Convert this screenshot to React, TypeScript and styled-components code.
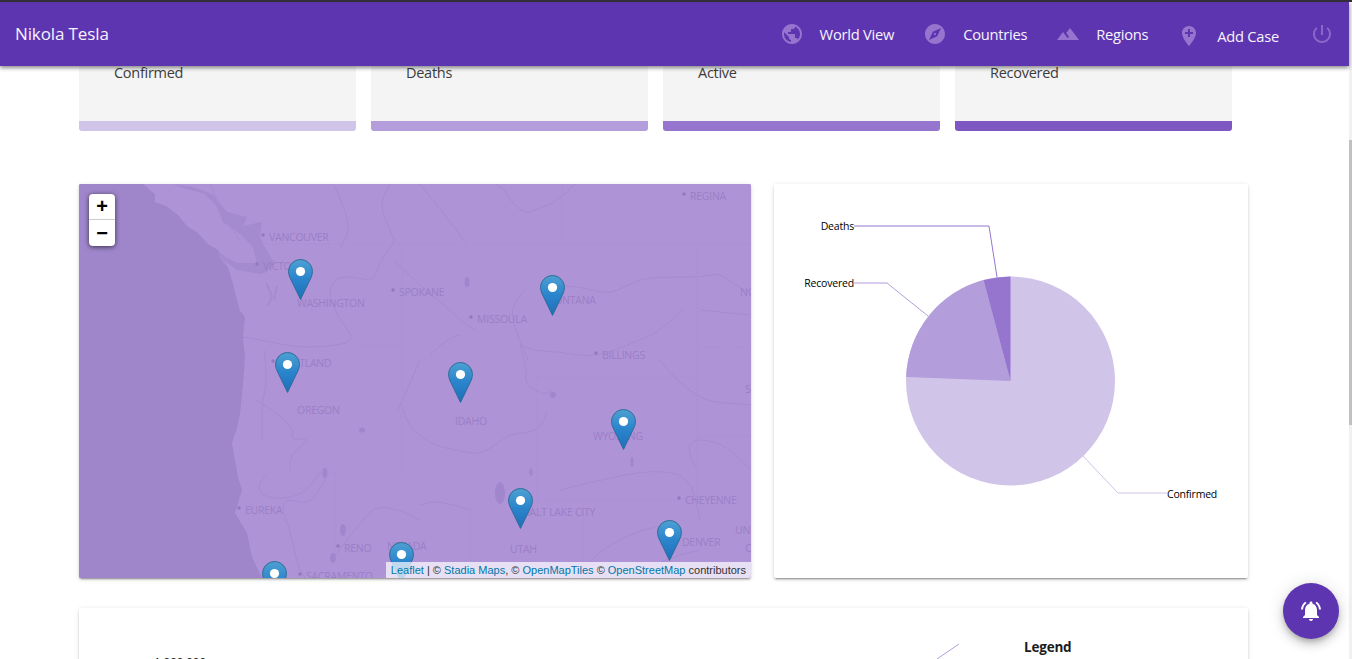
import React from "react";
import styled, { createGlobalStyle } from "styled-components";

const PURPLE = "#5e35b1";
const UI_FONT = `"Open Sans", "Noto Sans", sans-serif`;

const Global = createGlobalStyle`
  html, body { margin: 0; padding: 0; height: 100%; overflow: hidden; background: #fff; }
  #root { height: 100%; }
  * { box-sizing: border-box; }
`;

const Page = styled.div`
  width: 1352px;
  height: 659px;
  display: flex;
  flex-direction: column;
  overflow: hidden;
  font-family: ${UI_FONT};
  background: #fff;
`;
const WindowEdge = styled.div`
  height: 2px;
  flex: none;
  background: #33303a;
`;
const Viewport = styled.div`
  flex: 1;
  min-height: 0;
  display: flex;
`;
const Column = styled.div`
  width: 1349px;
  display: flex;
  flex-direction: column;
  min-height: 0;
`;
const ScrollTrack = styled.div`
  width: 3px;
  background: #f1f1f1;
  padding-top: 138px;
`;
const ScrollThumb = styled.div`
  height: 285px;
  background: #c1c1c1;
`;
const AppBar = styled.header`
  height: 64px;
  flex: none;
  position: relative;
  z-index: 3;
  display: flex;
  align-items: center;
  justify-content: space-between;
  padding: 0 15px;
  background: ${PURPLE};
  color: #f7f3fd;
  box-shadow: 0 2px 4px rgba(0, 0, 0, 0.45);
`;
const Brand = styled.div`
  font-size: 17px;
  letter-spacing: -0.12px;
  margin-top: -1px;
`;
const Nav = styled.nav`
  display: flex;
  align-items: center;
`;
const NavItem = styled.a`
  display: flex;
  align-items: center;
  gap: 16px;
  margin-right: 29px;
  font-size: 14.7px;
  letter-spacing: -0.25px;
  white-space: nowrap;
`;
const NavLabel = styled.span<{ $drop?: boolean }>`
  margin-top: ${(p) => (p.$drop ? "3px" : "-1px")};
`;
const NavIcon = styled.svg<{ $drop?: boolean }>`
  width: 24px;
  height: 24px;
  fill: #9575cd;
  flex: none;
  margin-top: ${(p) => (p.$drop ? "4px" : "0")};
`;
const PowerIcon = styled.svg`
  width: 24px;
  height: 24px;
  margin-left: 2px;
  fill: #8a68c8;
  flex: none;
`;
const Main = styled.main`
  flex: 1;
  min-height: 0;
  overflow: hidden;
  padding-left: 79px;
  display: flex;
  flex-direction: column;
`;
const StatRow = styled.section`
  display: grid;
  grid-template-columns: repeat(4, 277px);
  gap: 15px;
`;
const StatCard = styled.div<{ $bar: string }>`
  height: 65px;
  background: #f4f4f4;
  border-bottom: 10px solid ${(p) => p.$bar};
  border-radius: 0 0 3px 3px;
  padding-left: 35px;
  color: #3c3c3c;
  font-size: 14.5px;
  letter-spacing: -0.27px;
  line-height: 14px;
`;
const MapRow = styled.section`
  display: flex;
  gap: 23px;
  margin-top: 53px;
`;
const Surface = `
  background: #fff;
  border-radius: 2px;
  box-shadow: 0 2px 2px 0 rgba(0,0,0,.14), 0 3px 1px -2px rgba(0,0,0,.2), 0 1px 5px 0 rgba(0,0,0,.12);
`;
const MapCard = styled.div`
  ${Surface}
  position: relative;
  width: 672px;
  height: 394px;
  overflow: hidden;
  background: #ae93d7;
`;
const MapArt = styled.svg`
  display: block;
  width: 672px;
  height: 394px;
`;
const MapLabel = styled.text`
  font-family: ${UI_FONT};
  font-size: 10.5px;
  fill: #9a7fc6;
  letter-spacing: -0.25px;
`;
const ZoomControl = styled.div`
  position: absolute;
  left: 10px;
  top: 10px;
  width: 26px;
  border-radius: 4px;
  background: #fff;
  box-shadow: 0 1px 5px rgba(0, 0, 0, 0.65);
  display: flex;
  flex-direction: column;
`;
const ZoomButton = styled.div<{ $last?: boolean }>`
  height: 26px;
  display: flex;
  align-items: center;
  justify-content: center;
  color: #000;
  font: bold 20px "Liberation Sans", sans-serif;
  border-bottom: ${(p) => (p.$last ? "none" : "1px solid #ccc")};
`;
const Attribution = styled.div`
  position: absolute;
  right: 0;
  bottom: 0;
  height: 16px;
  padding: 0 5px;
  background: rgba(255, 255, 255, 0.7);
  color: #333;
  font: 11px/16px "Liberation Sans", sans-serif;
  white-space: nowrap;
`;
const AttrLink = styled.a`
  color: #0078a8;
`;
const PinSvg = styled.svg<{ $x: number; $y: number }>`
  position: absolute;
  left: ${(p) => p.$x - 79 - 12.5}px;
  top: ${(p) => p.$y - 184}px;
  width: 25px;
  height: 41px;
`;
const PieCard = styled.div`
  ${Surface}
  width: 474px;
  height: 394px;
`;
const PieArt = styled.svg`
  display: block;
  width: 474px;
  height: 394px;
`;
const ChartText = styled.text`
  font-family: ${UI_FONT};
  font-size: 10.5px;
  letter-spacing: -0.2px;
  fill: #000;
`;
const AxisText = styled(ChartText)`
  font-size: 11.5px;
  letter-spacing: 0;
`;
const ChartCard = styled.section`
  ${Surface}
  width: 1169px;
  height: 300px;
  margin-top: 30px;
  flex: none;
  display: flex;
`;
const ChartArt = styled.svg`
  display: block;
  width: 945px;
  height: 100px;
  flex: none;
`;
const Legend = styled.div`
  padding-top: 30px;
  font-size: 13.5px;
  font-weight: 700;
  letter-spacing: -0.2px;
  line-height: 19px;
  color: #1c1c1c;
`;
const Fab = styled.button`
  position: absolute;
  left: 1283px;
  top: 583px;
  width: 56px;
  height: 56px;
  border: none;
  padding: 0;
  border-radius: 50%;
  background: ${PURPLE};
  display: flex;
  align-items: center;
  justify-content: center;
  z-index: 4;
  box-shadow: 0 3px 5px -1px rgba(0,0,0,.2), 0 6px 10px 0 rgba(0,0,0,.14), 0 1px 18px 0 rgba(0,0,0,.12);
`;
const FabIcon = styled.svg`
  width: 24px;
  height: 24px;
  fill: #fff;
`;

const ICONS = {
  public:
    "M12 2C6.48 2 2 6.48 2 12s4.48 10 10 10 10-4.48 10-10S17.52 2 12 2zm-1 17.93c-3.95-.49-7-3.85-7-7.93 0-.62.08-1.21.21-1.79L9 15v1c0 1.1.9 2 2 2v1.93zm6.9-2.54c-.26-.81-1-1.39-1.9-1.39h-1v-3c0-.55-.45-1-1-1H8v-2h2c.55 0 1-.45 1-1V7h2c1.1 0 2-.9 2-2v-.41c2.93 1.19 5 4.06 5 7.41 0 2.08-.8 3.97-2.1 5.39z",
  explore:
    "M12 10.9c-.61 0-1.1.49-1.1 1.1s.49 1.1 1.1 1.1c.61 0 1.1-.49 1.1-1.1s-.49-1.1-1.1-1.1zM12 2C6.48 2 2 6.48 2 12s4.48 10 10 10 10-4.48 10-10S17.52 2 12 2zm2.19 12.19L6 18l3.81-8.19L18 6l-3.81 8.19z",
  terrain: "M14 6l-3.75 5 2.85 3.8-1.6 1.2C9.81 13.75 7 10 7 10l-6 8h22L14 6z",
  addLocation:
    "M12 2C8.14 2 5 5.14 5 9c0 5.25 7 13 7 13s7-7.75 7-13c0-3.86-3.14-7-7-7zm4 8h-3v3h-2v-3H8V8h3V5h2v3h3v2z",
  power:
    "M13 3h-2v10h2V3zm4.83 2.17l-1.42 1.42C17.99 7.86 19 9.81 19 12c0 3.87-3.13 7-7 7s-7-3.13-7-7c0-2.19 1.01-4.14 2.58-5.42L6.17 5.17C4.23 6.82 3 9.26 3 12c0 4.97 4.03 9 9 9s9-4.03 9-9c0-2.74-1.23-5.18-3.17-6.83z",
  bell:
    "M7.58 4.08L6.15 2.65C3.75 4.48 2.17 7.3 2.03 10.5h2c.15-2.65 1.51-4.97 3.55-6.42zm12.39 6.42h2c-.15-3.2-1.73-6.02-4.12-7.85l-1.42 1.43c2.02 1.45 3.39 3.77 3.54 6.42zM18 11c0-3.07-1.64-5.64-4.5-6.32V4c0-.83-.67-1.5-1.5-1.5s-1.5.67-1.5 1.5v.68C7.63 5.36 6 7.92 6 11v5l-2 2v1h16v-1l-2-2v-5zm-6 11c.14 0 .27-.01.4-.04.65-.14 1.18-.58 1.44-1.18.1-.24.15-.5.15-.78h-4c.01 1.1.9 2 2.01 2z",
};

const NAV = [
  { label: "World View", icon: ICONS.public },
  { label: "Countries", icon: ICONS.explore },
  { label: "Regions", icon: ICONS.terrain },
  { label: "Add Case", icon: ICONS.addLocation, drop: true },
];

const STATS = [
  { label: "Confirmed", bar: "#d1c4e9" },
  { label: "Deaths", bar: "#b39ddb" },
  { label: "Active", bar: "#9575cd" },
  { label: "Recovered", bar: "#7e57c2" },
];

const PINS = [
  [300, 259], [287, 352], [552, 275], [460, 362], [623, 409],
  [520, 488], [669, 520], [401, 542], [274, 561],
];

const CITIES: [string, number, number, boolean][] = [
  ["VANCOUVER", 269, 241, true],
  ["VICTORIA", 263, 270, true],
  ["WASHINGTON", 297, 307, false],
  ["SPOKANE", 399, 296, true],
  ["MISSOULA", 477, 323, true],
  ["MONTANA", 545, 304, false],
  ["BILLINGS", 602, 359, true],
  ["REGINA", 690, 200, true],
  ["PORTLAND", 279, 367, true],
  ["OREGON", 297, 414, false],
  ["IDAHO", 455, 425, false],
  ["WYOMING", 593, 440, false],
  ["CHEYENNE", 685, 504, true],
  ["EUREKA", 245, 514, true],
  ["RENO", 344, 552, true],
  ["NEVADA", 387, 550, false],
  ["SACRAMENTO", 306, 580, true],
  ["SALT LAKE CITY", 524, 516, false],
  ["UTAH", 510, 553, false],
  ["DENVER", 682, 546, false],
  ["UNITED", 735, 534, false],
  ["COLORADO", 745, 552, false],
  ["NORTH", 740, 296, false],
  ["SOUTH", 745, 393, false],
];

const RIVERS = [
  "M243 337 L267 341 L293 347 L327 347 L357 341 L337 317 L328 291 L337 277 L357 277 L373 282 L380 261 L393 244",
  "M403 410 L408 425 L422 438 L440 447 L457 450 L480 455 L500 442 L510 434 L527 433 L540 428 L547 413",
  "M540 288 L560 286 L580 287 L600 292 L610 293 L625 287 L643 278 L675 277 L700 277 L720 273 L735 285 L751 293",
  "M683 308 L663 330 L640 340 L610 352 L587 357 L560 352 L530 350 L520 344",
  "M520 344 L527 370 L525 385 L545 395 L552 390",
  "M395 262 L410 275 L425 290 L450 310 L462 322 L475 330",
  "M525 290 L510 305 L515 330 L528 360",
  "M264 350 L268 380 L262 400 L262 440",
  "M255 400 L275 410 L295 432 L290 440 L312 438 L290 455 L290 470",
  "M265 475 L255 488 L270 500 L305 495 L320 470 L326 480 L322 485 L310 505 L285 498 L283 510",
  "M283 510 L290 530 L298 568 L305 578",
  "M335 555 L355 530 L375 505 L400 510 L420 520",
  "M470 510 L440 500 L420 505",
  "M575 578 L590 560 L610 545 L640 530 L665 525",
  "M620 585 L660 560 L700 550",
  "M560 490 L600 480 L650 470 L690 475 L700 520",
  "M335 186 L345 210 L350 230 L340 248",
  "M390 184 L380 200 L385 220 L395 240 L392 244",
  "M575 184 L560 200 L535 210 L525 214 L510 200 L505 190 L495 184",
  "M210 184 L225 220 L240 240",
  "M420 184 L445 215 L465 242",
  "M700 310 L750 315",
  "M660 360 L690 400 L751 405",
  "M697 470 L680 440 L720 440 L751 470",
  "M420 360 L405 395 L398 410",
  "M430 355 L445 340 L460 335",
];

const BORDERS = [
  "M265 244 H751",
  "M402 244 V472",
  "M562 184 V244",
  "M697 244 V500",
  "M537 377 H697",
  "M537 377 V500",
  "M537 500 H697",
  "M697 347 H751",
  "M697 436 H751",
  "M240 472 H537",
  "M335 472 V552",
  "M470 500 V578",
  "M583 500 V578",
  "M357 345 H402",
];

const LAKES: [number, number, number, number][] = [
  [500, 493, 5, 11], [325, 473, 2.5, 5], [343, 530, 3, 6], [333, 558, 3, 5],
  [362, 430, 3, 2.5], [467, 282, 2.5, 5], [553, 395, 3, 3], [632, 462, 1.5, 5], [531, 472, 1.5, 4],
];

// Rounds a polyline's corners into a smooth river course.
const smoothPath = (d: string) => {
  const n = (d.match(/-?\d+(\.\d+)?/g) || []).map(Number);
  const pts: [number, number][] = [];
  for (let i = 0; i + 1 < n.length; i += 2) pts.push([n[i], n[i + 1]]);
  let out = `M${pts[0][0]} ${pts[0][1]}`;
  for (let i = 1; i < pts.length - 1; i++) {
    const mx = (pts[i][0] + pts[i + 1][0]) / 2;
    const my = (pts[i][1] + pts[i + 1][1]) / 2;
    out += ` Q${pts[i][0]} ${pts[i][1]} ${mx} ${my}`;
  }
  const last = pts[pts.length - 1];
  return `${out} L${last[0]} ${last[1]}`;
};

const Pin = ({ x, y, id }: { x: number; y: number; id: string }) => (
  <PinSvg $x={x} $y={y} viewBox="0 0 25 41">
    <defs>
      <linearGradient id={id} x1="0" y1="0" x2="0" y2="1">
        <stop offset="0" stopColor="#4ea0d2" />
        <stop offset="0.5" stopColor="#2a84cc" />
        <stop offset="1" stopColor="#1f6fb8" />
      </linearGradient>
    </defs>
    <path
      d="M12.5 .6C5.9 .6 .6 5.9 .6 12.5c0 2.6 .8 5 2.1 7.6L12.5 40.4l9.8-20.3c1.3-2.6 2.1-5 2.1-7.6C24.4 5.9 19.1 .6 12.5 .6z"
      fill={`url(#${id})`}
      stroke="#2e6c97"
      strokeWidth="1"
    />
    <circle cx="12.5" cy="12.5" r="4.6" fill="#fff" />
  </PinSvg>
);

const Land = () => (
  <MapArt viewBox="79 184 672 394">
    <defs>
      <filter id="tile-soft" x="0" y="0" width="100%" height="100%">
        <feGaussianBlur stdDeviation="0.4" />
      </filter>
    </defs>
    <rect x="79" y="184" width="672" height="394" fill="#ae93d7" />
    <g filter="url(#tile-soft)">
      <path
        fill="#9f86cb"
        d="M79 184 L143 184 L150 190 L155 194 L155 202 L166 206 L177 214 L187 226 L197 232 L208 244 L218 250 L220 258 L228 267 L233 284 L240 311 L245 317 L243 337 L245 357 L243 384 L240 414 L237 428 L232 443 L238 477 L242 490 L235 513 L247 533 L252 557 L262 578 L79 578 Z"
      />
      <path
        fill="#a48ace"
        d="M173 184 L193 187 L212 194 L227 212 L247 217 L243 226 L262 222 L260 237 L265 247 L275 264 L267 272 L260 274 L237 270 L220 258 L218 250 L224 256 L237 263 L257 263 L253 247 L240 234 L223 222 L217 207 L205 194 L180 187 Z"
      />
      <path fill="none" stroke="#a48ace" strokeWidth="1.8" strokeLinejoin="round" d="M266 283 L272 296 L268 306 M277 286 L274 300" />
      <g fill="none" stroke="#a78bd1" strokeWidth="1" strokeLinejoin="round">
        {RIVERS.map((d) => <path key={d} d={smoothPath(d)} />)}
      </g>
      <g fill="none" stroke="#a98ed4" strokeWidth="1" strokeDasharray="2 1.5">
        {BORDERS.map((d) => <path key={d} d={d} />)}
      </g>
      <g fill="#a086cc">
        {LAKES.map(([cx, cy, rx, ry]) => (
          <ellipse key={`${cx}-${cy}`} cx={cx} cy={cy} rx={rx} ry={ry} />
        ))}
      </g>
    </g>
    {CITIES.map(([name, x, y, dot]) => (
      <React.Fragment key={name}>
        {dot && <circle cx={x - 6} cy={y - 6} r="1.7" fill="#9278bd" />}
        <MapLabel x={x} y={y}>{name}</MapLabel>
      </React.Fragment>
    ))}
  </MapArt>
);

const Pie = () => (
  <PieArt viewBox="774 184 474 394">
    <circle cx="1010.5" cy="381" r="104.5" fill="#d1c4e9" />
    <path d="M1010.5 381 L906.1 377 A104.5 104.5 0 0 1 983.5 280 Z" fill="#b39ddb" />
    <path d="M1010.5 381 L983.5 280 A104.5 104.5 0 0 1 1010.5 276.5 Z" fill="#9575cd" />
    <g fill="none" strokeWidth="1">
      <path d="M997 277 L989 226 H854" stroke="#9575cd" />
      <path d="M928 316 L887 283 H854" stroke="#b39ddb" />
      <path d="M1083 456 L1118 493 H1167" stroke="#d1c4e9" />
    </g>
    <ChartText x="854" y="230" textAnchor="end">Deaths</ChartText>
    <ChartText x="854" y="287" textAnchor="end">Recovered</ChartText>
    <ChartText x="1167" y="498">Confirmed</ChartText>
  </PieArt>
);

export default function App() {
  return (
    <Page>
      <Global />
      <WindowEdge />
      <Viewport>
        <Column>
          <AppBar>
            <Brand>Nikola Tesla</Brand>
            <Nav>
              {NAV.map((n) => (
                <NavItem key={n.label}>
                  <NavIcon viewBox="0 0 24 24" $drop={n.drop}><path d={n.icon} /></NavIcon>
                  <NavLabel $drop={n.drop}>{n.label}</NavLabel>
                </NavItem>
              ))}
              <PowerIcon viewBox="0 0 24 24"><path d={ICONS.power} /></PowerIcon>
            </Nav>
          </AppBar>
          <Main>
            <StatRow>
              {STATS.map((s) => (
                <StatCard key={s.label} $bar={s.bar}>{s.label}</StatCard>
              ))}
            </StatRow>
            <MapRow>
              <MapCard>
                <Land />
                {PINS.map(([x, y], i) => <Pin key={i} x={x} y={y} id={`pin${i}`} />)}
                <ZoomControl>
                  <ZoomButton>+</ZoomButton>
                  <ZoomButton $last>−</ZoomButton>
                </ZoomControl>
                <Attribution>
                  <AttrLink>Leaflet</AttrLink> | © <AttrLink>Stadia Maps</AttrLink>, © <AttrLink>OpenMapTiles</AttrLink> © <AttrLink>OpenStreetMap</AttrLink> contributors
                </Attribution>
              </MapCard>
              <PieCard><Pie /></PieCard>
            </MapRow>
            <ChartCard>
              <ChartArt viewBox="79 608 945 100">
                <AxisText x="154" y="666">1,000,000</AxisText>
                <path d="M937 659 L959 644" fill="none" stroke="#b39ddb" strokeWidth="1" />
              </ChartArt>
              <Legend>Legend</Legend>
            </ChartCard>
          </Main>
        </Column>
        <ScrollTrack><ScrollThumb /></ScrollTrack>
      </Viewport>
      <Fab><FabIcon viewBox="0 0 24 24"><path d={ICONS.bell} /></FabIcon></Fab>
    </Page>
  );
}
